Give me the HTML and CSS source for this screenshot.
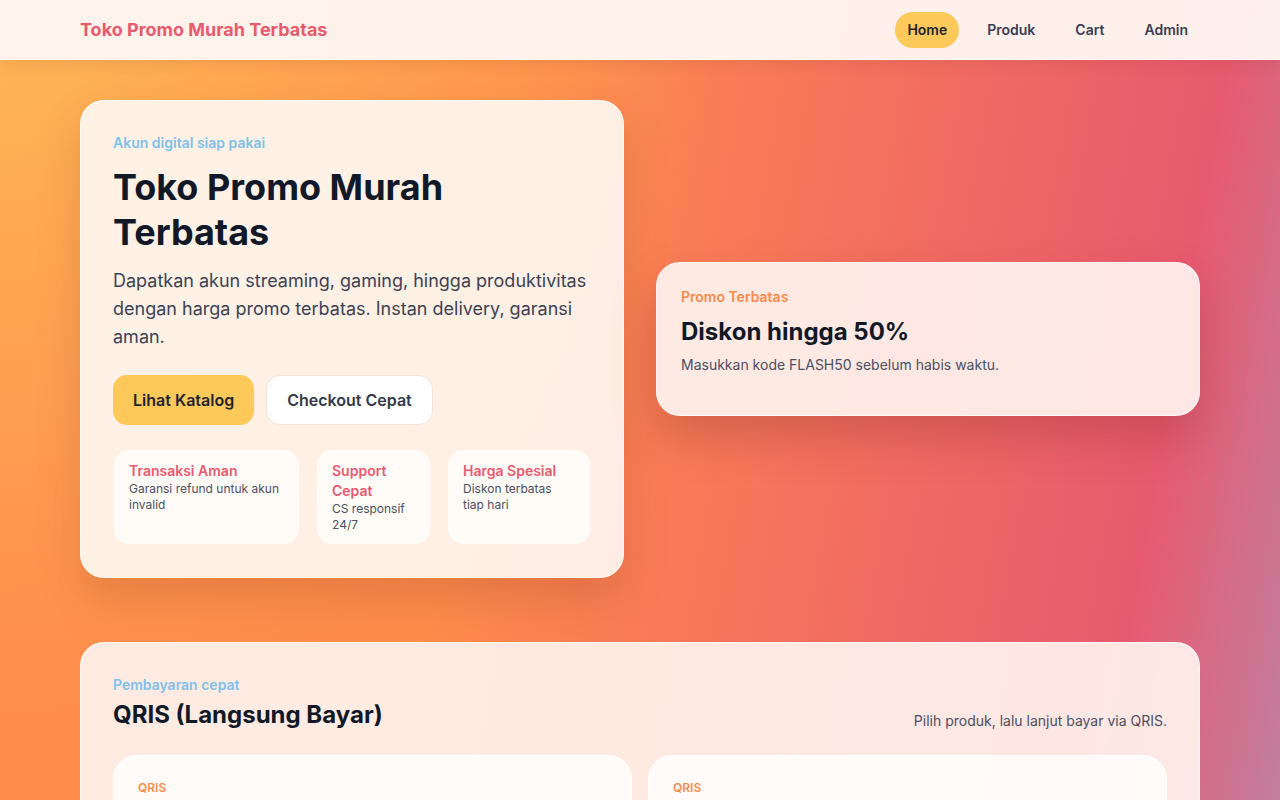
FILE: index.html
```html
<!DOCTYPE html>
<html lang="id">
<head>
<meta charset="utf-8">
<title>Toko Promo Murah Terbatas</title>
<link rel="stylesheet" href="styles.css">
</head>
<body>
<header class="topbar">
  <div class="topbar-inner">
    <a class="brand" href="#">Toko Promo Murah Terbatas</a>
    <nav class="nav">
      <a class="nav-link active" href="#">Home</a>
      <a class="nav-link" href="#">Produk</a>
      <a class="nav-link" href="#">Cart</a>
      <a class="nav-link" href="#">Admin</a>
    </nav>
  </div>
</header>
<main class="page">
  <section class="hero">
    <div class="card hero-card">
      <div class="eyebrow blue">Akun digital siap pakai</div>
      <h1 class="hero-title">Toko Promo Murah Terbatas</h1>
      <p class="hero-text">Dapatkan akun streaming, gaming, hingga produktivitas dengan harga promo terbatas. Instan delivery, garansi aman.</p>
      <div class="actions">
        <a class="btn btn-primary" href="#">Lihat Katalog</a>
        <a class="btn btn-ghost" href="#">Checkout Cepat</a>
      </div>
      <div class="features">
        <div class="feature">
          <div class="feature-title">Transaksi Aman</div>
          <div class="feature-desc">Garansi refund untuk akun invalid</div>
        </div>
        <div class="feature">
          <div class="feature-title">Support Cepat</div>
          <div class="feature-desc">CS responsif 24/7</div>
        </div>
        <div class="feature">
          <div class="feature-title">Harga Spesial</div>
          <div class="feature-desc">Diskon terbatas tiap hari</div>
        </div>
      </div>
    </div>
    <div class="card promo-card">
      <div class="eyebrow orange">Promo Terbatas</div>
      <h2 class="promo-title">Diskon hingga 50%</h2>
      <p class="promo-text">Masukkan kode FLASH50 sebelum habis waktu.</p>
    </div>
  </section>
  <section class="card pay-section">
    <div class="section-head">
      <div>
        <div class="eyebrow blue">Pembayaran cepat</div>
        <h2 class="section-title">QRIS (Langsung Bayar)</h2>
      </div>
      <p class="section-note">Pilih produk, lalu lanjut bayar via QRIS.</p>
    </div>
    <div class="pay-grid">
      <div class="pay-card"><div class="pay-label">QRIS</div></div>
      <div class="pay-card"><div class="pay-label">QRIS</div></div>
    </div>
  </section>
</main>
</body>
</html>
```
FILE: styles.css
```css
* { box-sizing: border-box; }
html, body { margin: 0; padding: 0; }
body {
  font-family: Inter, "Noto Sans", sans-serif;
  color: #111827;
  min-height: 100vh;
  background:
    radial-gradient(circle at 0 0, #ffb857 0, rgba(255, 184, 87, 0.55) 300px, rgba(255, 184, 87, 0) 720px),
    linear-gradient(100deg, #ff8c4b 0%, #ff8c4b 38%, #f4705f 64%, #e85a6e 87%, #c27e9f 100%);
  background-attachment: fixed;
}
a { text-decoration: none; color: inherit; }
h1, h2, p { margin: 0; }

.topbar {
  height: 60px;
  background: rgba(255, 246, 241, 0.96);
  box-shadow: 0 4px 14px rgba(120, 50, 30, 0.12);
  border-bottom: 1px solid rgba(255, 255, 255, 0.6);
}
.topbar-inner {
  width: 1120px;
  height: 100%;
  margin: 0 auto;
  display: flex;
  align-items: center;
  justify-content: space-between;
}
.brand {
  font-size: 18px;
  font-weight: 700;
  color: #e85a70;
}
.nav { display: flex; gap: 16px; }
.nav-link {
  font-size: 14px;
  font-weight: 600;
  line-height: 20px;
  padding: 8px 12px;
  border-radius: 999px;
  color: #3a3d52;
}
.nav-link.active { background: #fdc95a; color: #1f2230; }

.page {
  width: 1120px;
  margin: 0 auto;
  padding-top: 40px;
}
.hero {
  display: grid;
  grid-template-columns: 1fr 1fr;
  gap: 32px;
  align-items: center;
}
.card {
  background: rgba(255, 250, 245, 0.9);
  border: 1px solid rgba(255, 255, 255, 0.7);
  border-radius: 24px;
}
.hero-card {
  padding: 32px;
  box-shadow: 0 22px 44px rgba(140, 60, 30, 0.22);
}
.eyebrow {
  font-size: 14px;
  font-weight: 600;
  line-height: 20px;
}
.blue { color: #7ec0ea; }
.orange { color: #f98b4c; }
.hero-title {
  margin-top: 12px;
  font-size: 36px;
  line-height: 45px;
  font-weight: 700;
  color: #111827;
}
.hero-text {
  margin-top: 12px;
  font-size: 18px;
  line-height: 28px;
  color: #3d4152;
}
.actions {
  margin-top: 24px;
  display: flex;
  gap: 12px;
}
.btn {
  display: inline-flex;
  align-items: center;
  height: 50px;
  padding: 0 20px;
  border-radius: 14px;
  font-size: 16px;
  font-weight: 600;
}
.btn-primary { background: #fdc95a; color: #1f2230; }
.btn-ghost {
  background: #ffffff;
  border: 1px solid #f1e4dc;
  color: #343848;
}
.features {
  margin-top: 24px;
  display: grid;
  grid-template-columns: 187fr 115fr 144fr;
  gap: 16px;
}
.feature {
  height: 96px;
  padding: 11px 15px;
  background: rgba(255, 253, 250, 0.9);
  border: 1px solid rgba(255, 240, 230, 0.9);
  border-radius: 16px;
}
.feature-title {
  font-size: 14px;
  line-height: 20px;
  font-weight: 600;
  color: #e85a70;
}
.feature-desc {
  font-size: 12px;
  line-height: 16px;
  color: #4b4f5e;
}

.promo-card {
  padding: 24px;
  height: 154px;
  background: rgba(255, 240, 236, 0.94);
  box-shadow: 0 22px 44px rgba(130, 40, 40, 0.28);
}
.promo-title {
  margin-top: 9px;
  font-size: 24px;
  line-height: 32px;
  font-weight: 700;
  color: #111827;
}
.promo-text {
  margin-top: 7px;
  font-size: 14px;
  line-height: 20px;
  color: #4b4f5e;
}

.pay-section {
  margin-top: 64px;
  padding: 32px;
  background: rgba(255, 243, 238, 0.92);
}
.section-head {
  display: flex;
  justify-content: space-between;
  align-items: flex-end;
}
.section-title {
  margin-top: 4px;
  font-size: 24px;
  line-height: 32px;
  font-weight: 700;
  color: #111827;
}
.section-note {
  font-size: 14px;
  line-height: 20px;
  color: #4b4f5e;
}
.pay-grid {
  margin-top: 24px;
  display: grid;
  grid-template-columns: 1fr 1fr;
  gap: 16px;
}
.pay-card {
  height: 200px;
  padding: 24px;
  background: rgba(255, 252, 250, 0.92);
  border: 1px solid rgba(255, 255, 255, 0.8);
  border-radius: 24px;
}
.pay-label {
  font-size: 12px;
  line-height: 16px;
  font-weight: 600;
  color: #f98b4c;
}
```
